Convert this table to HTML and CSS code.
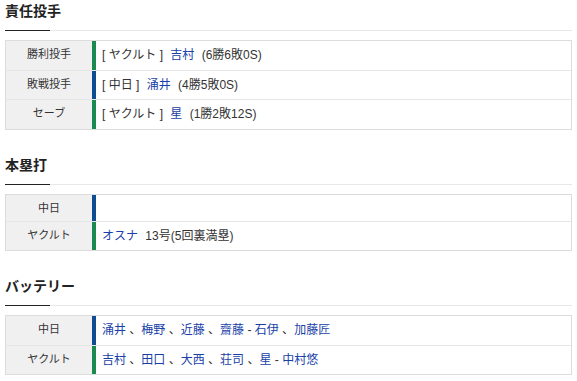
FILE: index.html
```html
<!DOCTYPE html>
<html lang="ja">
<head>
<meta charset="utf-8">
<title>試合結果</title>
<link rel="stylesheet" href="styles.css">
</head>
<body>
<div class="page">
  <section class="sec">
    <h2 class="sec-title">責任投手</h2>
    <div class="tbl">
      <div class="row">
        <div class="lbl">勝利投手</div>
        <div class="val s"><span class="team">[ ヤクルト ]</span> <a class="nm">吉村</a> <span class="note">(6勝6敗0S)</span></div>
      </div>
      <div class="row">
        <div class="lbl">敗戦投手</div>
        <div class="val d"><span class="team">[ 中日 ]</span> <a class="nm">涌井</a> <span class="note">(4勝5敗0S)</span></div>
      </div>
      <div class="row">
        <div class="lbl">セーブ</div>
        <div class="val s"><span class="team">[ ヤクルト ]</span> <a class="nm">星</a> <span class="note">(1勝2敗12S)</span></div>
      </div>
    </div>
  </section>

  <section class="sec">
    <h2 class="sec-title">本塁打</h2>
    <div class="tbl">
      <div class="row">
        <div class="lbl">中日</div>
        <div class="val d"></div>
      </div>
      <div class="row">
        <div class="lbl">ヤクルト</div>
        <div class="val s"><a class="nm">オスナ</a> <span class="note">13号(5回裏満塁)</span></div>
      </div>
    </div>
  </section>

  <section class="sec">
    <h2 class="sec-title">バッテリー</h2>
    <div class="tbl">
      <div class="row">
        <div class="lbl">中日</div>
        <div class="val d"><a class="nm">涌井</a> 、<a class="nm">梅野</a> 、<a class="nm">近藤</a> 、<a class="nm">齋藤</a> - <a class="nm">石伊</a> 、<a class="nm">加藤匠</a></div>
      </div>
      <div class="row">
        <div class="lbl">ヤクルト</div>
        <div class="val s"><a class="nm">吉村</a> 、<a class="nm">田口</a> 、<a class="nm">大西</a> 、<a class="nm">荘司</a> 、<a class="nm">星</a> - <a class="nm">中村悠</a></div>
      </div>
    </div>
  </section>
</div>
</body>
</html>
```

FILE: styles.css
```css
html, body {
  margin: 0;
  padding: 0;
  background: #fff;
}
body {
  font-family: "Liberation Sans", "Noto Sans CJK JP", sans-serif;
  color: #333;
}
.page {
  padding: 1px 5px 0 5px;
}
.sec + .sec {
  margin-top: 25px;
}
.sec-title {
  position: relative;
  margin: 0;
  padding: 0 0 9px 0;
  font-size: 14px;
  font-weight: bold;
  line-height: 20px;
  color: #222;
  border-bottom: 1px solid #e8e8e8;
}
.sec-title::after {
  content: "";
  position: absolute;
  left: 0;
  bottom: -1px;
  width: 45px;
  height: 1px;
  background: #222;
}
.tbl {
  margin-top: 9px;
  border: 1px solid #dcdcdc;
}
.row {
  display: flex;
}
.row + .row {
  border-top: 1px solid #e6e6e6;
}
.lbl {
  flex: none;
  width: 86px;
  padding: 4px 0;
  background: #f0f0f0;
  text-align: center;
  font-size: 11px;
  line-height: 18px;
  color: #333;
}
.val {
  flex: 1;
  padding: 4px 6px;
  font-size: 12px;
  line-height: 20.5px;
  color: #333;
  border-left: 4px solid #1a8a50;
}
.val.s {
  border-left-color: #1a8a50;
}
.val.d {
  border-left-color: #0f4c92;
}
.team {
  margin-right: 4px;
}
.team::first-letter {
  margin-right: 0;
}
.nm {
  color: #1a3fa8;
  text-decoration: none;
}
.note {
  margin-left: 4px;
}
```
